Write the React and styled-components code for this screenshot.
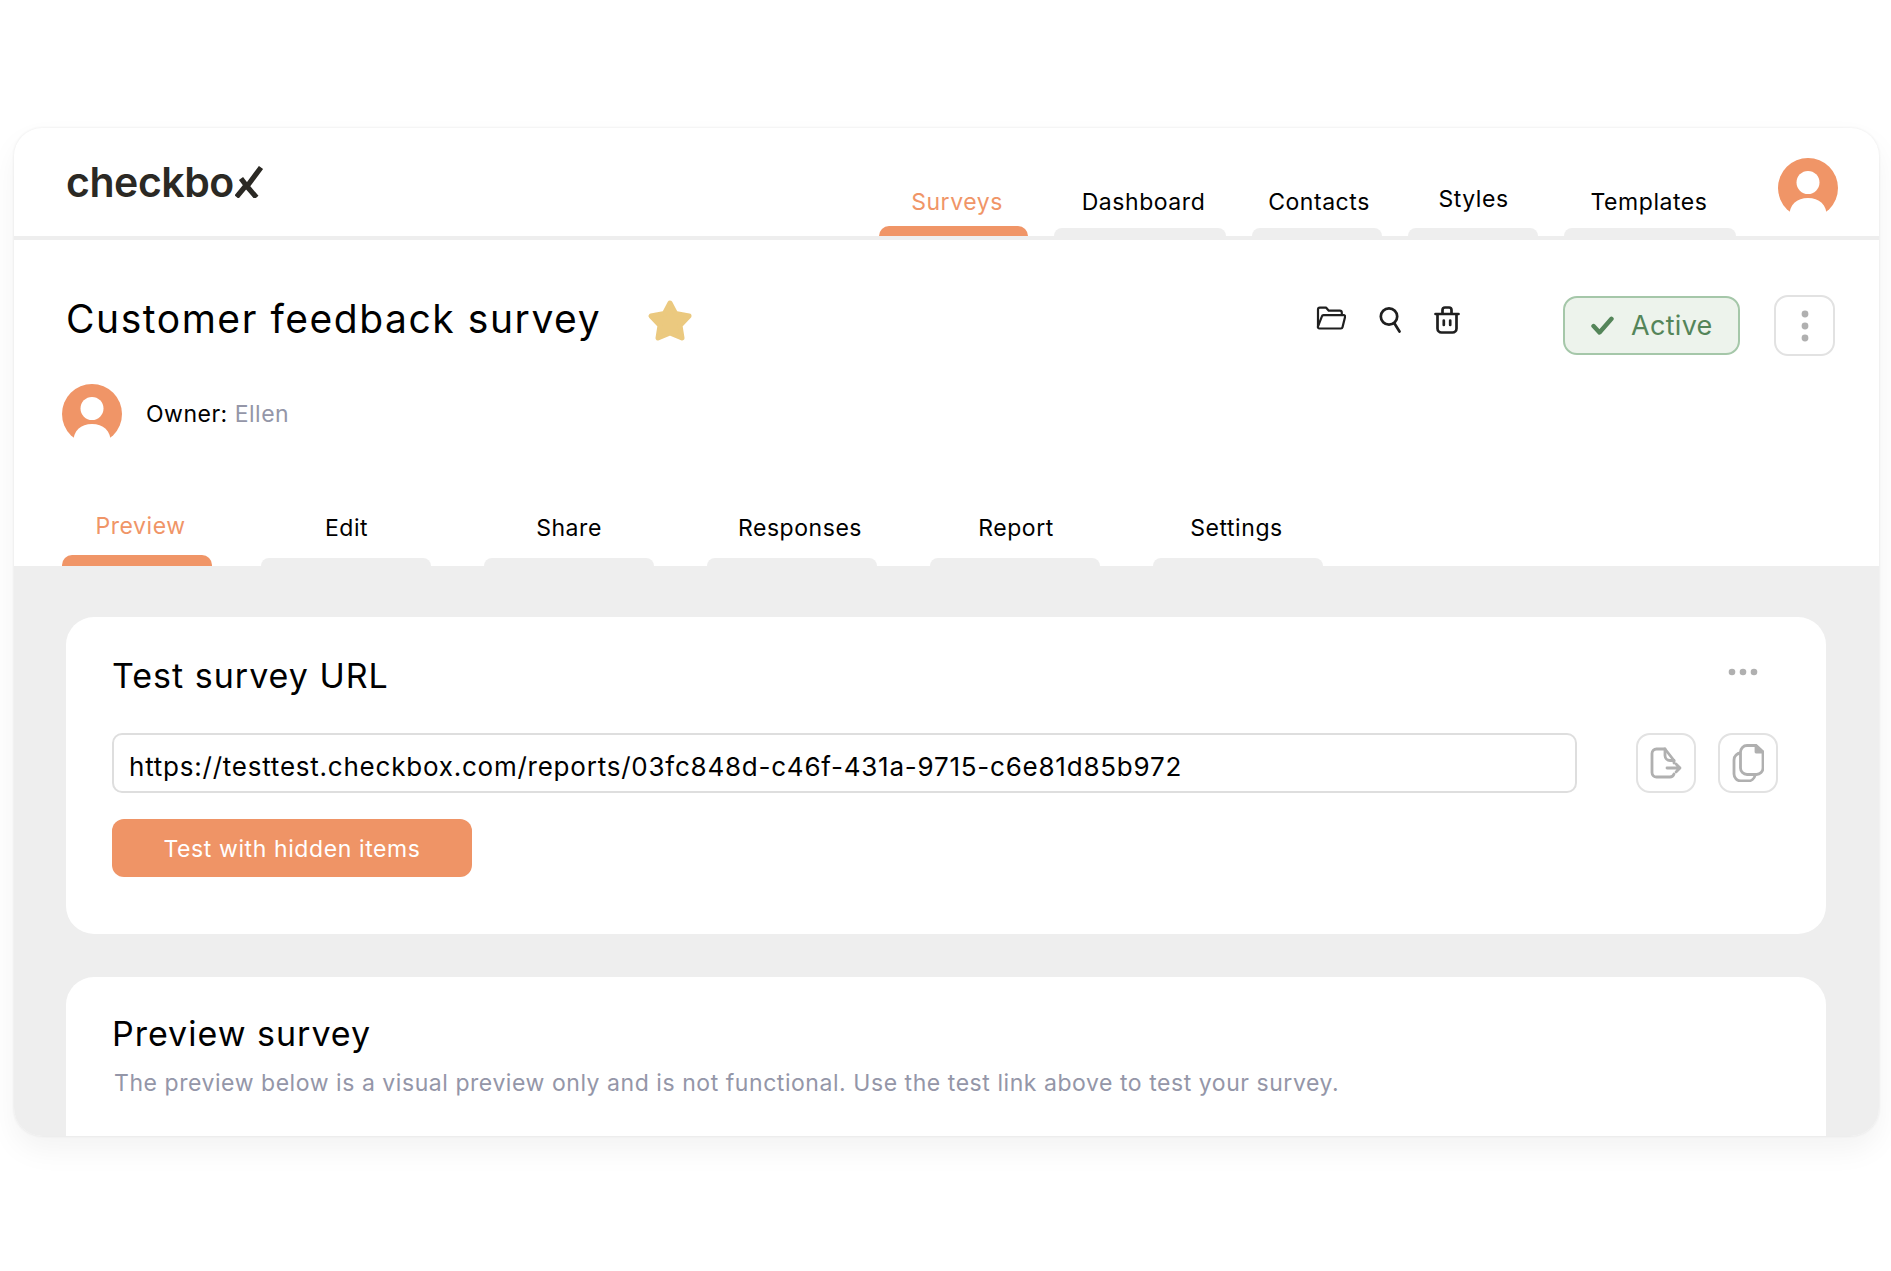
import React from 'react';
import styled, { createGlobalStyle } from 'styled-components';

const Global = createGlobalStyle`
  html, body { margin: 0; padding: 0; background: #fff; }
  body { font-family: Inter, "Liberation Sans", sans-serif; color: #000; }
  * { box-sizing: border-box; }
`;
const Page = styled.div`
  width: 1891px; height: 1271px; padding: 128px 12px 0 14px; overflow: hidden;
`;
const Frame = styled.div`
  height: 1008px; border-radius: 28px; overflow: hidden; background: #fff;
  display: flex; flex-direction: column;
  box-shadow: 0 0 3px rgba(0,0,0,.09), 0 14px 30px rgba(0,0,0,.05);
`;
const Header = styled.header`
  height: 112px; flex: none; display: flex; padding: 0 41px 0 52px; border-bottom: 4px solid #eee;
`;
const Logo = styled.div`
  display: flex; align-items: flex-start; margin-top: 31px; height: 46px;
  font: 600 41px/46px Inter, sans-serif; color: #2b2924; letter-spacing: -.45px;
  svg { margin: 7px 0 0 1px; }
`;
const Nav = styled.nav`
  margin-left: auto; display: flex; gap: 26px; align-items: stretch;
`;
const NavItem = styled.a`
  width: ${p => p.$w}px; display: flex; flex-direction: column; justify-content: flex-end;
`;
const Label = styled.span`
  font-size: 23px; line-height: 28px; letter-spacing: .55px; text-align: center; white-space: nowrap;
  color: ${p => (p.$active ? '#f09567' : '#000')};
  margin-bottom: ${p => p.$mb}px; margin-left: ${p => p.$shift || 0}px;
`;
const Bar = styled.i`
  display: block; border-radius: 10px 10px 0 0; flex: none;
  height: ${p => (p.$active ? p.$tall : 8)}px;
  background: ${p => (p.$active ? '#f09567' : '#eeeeee')};
`;
const AvatarBox = styled.div`
  flex: none; width: 60px; height: 60px;
  margin: ${p => p.$mt || 0}px 0 0 ${p => p.$ml || 0}px;
`;
const Top = styled.section`
  height: 326px; flex: none; padding: 56px 44px 0 52px; display: flex; flex-direction: column;
`;
const TitleRow = styled.div`
  display: flex; align-items: flex-start; height: 60px;
`;
const Title = styled.h1`
  margin: 0; font-size: 39px; line-height: 46px; font-weight: 400; letter-spacing: 1.55px; white-space: nowrap;
`;
const Star = styled.svg`
  margin: 3px 0 0 46px; flex: none;
`;
const Tools = styled.div`
  margin: 10px 0 0 auto; display: flex; align-items: flex-start; gap: 33px; color: #1f1f1f;
`;
const Status = styled.div`
  margin-left: 103px; width: 177px; height: 59px; margin-top: 0; border-radius: 14px; border: 2px solid #a5c7a9;
  background: #edf3ec; color: #548559; display: flex; align-items: center;
  padding-left: 26px; gap: 17px; font-size: 27px; letter-spacing: .3px;
`;
const IconBtn = styled.button`
  flex: none; width: 60px; height: 60px; padding: 0; border-radius: 14px; border: 2px solid #e2e2e2; background: #fff;
  display: flex; align-items: center; justify-content: center; color: #b0b0b0;
`;
const Kebab = styled(IconBtn)`
  margin-left: 34px; width: 61px; height: 61px; margin-top: -1px;
`;
const Owner = styled.div`
  margin: 28px 0 0 -4px; display: flex; align-items: center; gap: 24px;
  font-size: 23px; letter-spacing: .5px;
  span { color: #9496a8; }
`;
const Tabs = styled.nav`
  margin: auto 0 0 -4px; display: flex; gap: 53px; align-items: flex-end;
`;
const Tab = styled.a`
  width: ${p => p.$w}px; display: flex; flex-direction: column;
  margin-right: ${p => p.$mr || 0}px;
`;
const Main = styled.main`
  flex: 1; background: #eee; padding: 51px 53px 0 52px; display: flex; flex-direction: column; gap: 43px; min-height: 0;
`;
const Card = styled.section`
  background: #fff; border-radius: 28px; padding: 40px 48px 0 46px; height: 317px; flex: none;
`;
const PreviewCard = styled(Card)`
  flex: 1; height: auto; padding-top: 38px; border-radius: 28px 28px 0 0;
`;
const CardHead = styled.div`
  display: flex; justify-content: space-between; align-items: center; padding-right: 20px;
`;
const CardTitle = styled.h2`
  margin: 0; font-size: 34px; line-height: 38px; font-weight: 400; letter-spacing: 1px;
`;
const Dots = styled.svg`
  margin-top: -9px;
`;
const UrlRow = styled.div`
  margin-top: 38px; display: flex; align-items: center;
`;
const UrlField = styled.div`
  flex: 1; height: 60px; border: 2px solid #dedede; border-radius: 10px; padding-left: 15px;
  display: flex; align-items: center; font-size: 26px; letter-spacing: .77px; white-space: nowrap; padding-top: 6px;
`;
const UrlActions = styled.div`
  margin-left: 59px; display: flex; gap: 22px;
`;
const Primary = styled.button`
  display: block; margin-top: 26px; width: 360px; height: 58px; border: 0; border-radius: 12px; padding: 2px 0 0;
  background: #ef9466; color: #fff; font: 400 23px Inter, sans-serif; letter-spacing: .6px;
`;
const Desc = styled.p`
  margin: 15px 0 0 2px; font-size: 23px; line-height: 30px; color: #9496a8; letter-spacing: .55px; white-space: nowrap;
`;

const Avatar = ({ mt, ml }) => (
  <AvatarBox $mt={mt} $ml={ml}>
    <svg width="60" height="60" viewBox="0 0 60 60">
      <circle cx="30" cy="30" r="30" fill="#f09567" />
      <circle cx="30" cy="24.500" r="11.500" fill="#fff" />
      <path d="M11 60c0-14 8-20 19-20s19 6 19 20z" fill="#fff" />
    </svg>
  </AvatarBox>
);

const nav = [
  ['Surveys', 149, 7, true], ['Dashboard', 172, 7], ['Contacts', 130, 4],
  ['Styles', 130, 1, false, 3], ['Templates', 172, -2],
];
const tabs = [
  ['Preview', 150, 7, true, -4], ['Edit', 170, 1], ['Share', 170, 0],
  ['Responses', 170, 16], ['Report', 170, 2], ['Settings', 170, -3],
];

export default function App() {
  return (
    <Page>
      <Global />
      <Frame>
        <Header>
          <Logo>
            checkbo
            <svg width="29" height="32" viewBox="0 0 29 32">
              <path d="M1.500 31L11 19.500M6 12.500l6.500 8.500 9 10.500M13 19L26 1.500" fill="none" stroke="#2b2924" strokeWidth="5.200" />
            </svg>
          </Logo>
          <Nav>
            {nav.map(([t, w, shift, active, lift]) => (
              <NavItem key={t} $w={w}>
                <Label $active={active} $shift={shift} $mb={active ? 10 : 12 + (lift || 0)}>{t}</Label>
                <Bar $active={active} $tall={10} />
              </NavItem>
            ))}
          </Nav>
          <Avatar mt={30} ml={42} />
        </Header>
        <Top>
          <TitleRow>
            <Title>Customer feedback survey</Title>
            <Star width="46" height="44" viewBox="0 0 46 44">
              <path d="M23 4L28.500 14.500L42 17L33 26.500L35 39L23 34L11 39L13 26.500L4 17L17.500 14.500Z" fill="#ebc97f" stroke="#ebc97f" strokeWidth="5" strokeLinejoin="round" />
            </Star>
            <Tools>
              <svg width="30" height="25" viewBox="0 0 30 25" fill="none" stroke="currentColor" strokeWidth="2.200" strokeLinejoin="round" strokeLinecap="round">
                <path d="M2 20V3.500a1.800 1.800 0 0 1 1.800-1.800h6.400l2.600 3h11a2 2 0 0 1 2 2v2" />
                <path d="M7.500 9.200h20.300a1.300 1.300 0 0 1 1.300 1.600l-2.600 10.500a1.600 1.600 0 0 1-1.600 1.200H3.600a1.600 1.600 0 0 1-1.600-2.200l3.900-9.900a1.700 1.700 0 0 1 1.600-1.200z" />
              </svg>
              <svg width="22" height="27" viewBox="0 0 22 27" fill="none" stroke="currentColor" strokeWidth="2.700" strokeLinecap="round">
                <circle cx="10" cy="10.500" r="8.200" />
                <path d="M15.500 17.500L20.500 25.500" />
              </svg>
              <svg width="26" height="28" viewBox="0 0 26 28" fill="none" stroke="currentColor" strokeWidth="2.700" strokeLinejoin="round" strokeLinecap="round">
                <path d="M1.500 8h23M8.500 7.500V4a2.500 2.500 0 0 1 2.500-2.500h4A2.500 2.500 0 0 1 17.500 4v3.500M3.500 8v14.500a4 4 0 0 0 4 4h11a4 4 0 0 0 4-4V8" />
                <path d="M9.800 14.500v4.500M16.200 14.500v4.500" />
              </svg>
            </Tools>
            <Status>
              <svg width="23" height="19" viewBox="0 0 23 19" fill="none" stroke="currentColor" strokeWidth="4.400" strokeLinecap="round" strokeLinejoin="round">
                <path d="M2.500 10l6 6.500L20.500 2.800" />
              </svg>
              Active
            </Status>
            <Kebab aria-label="More">
              <svg width="8" height="32" viewBox="0 0 8 32" fill="#b0b0b0">
                <circle cx="4" cy="4" r="3.400" /><circle cx="4" cy="16" r="3.400" /><circle cx="4" cy="28" r="3.400" />
              </svg>
            </Kebab>
          </TitleRow>
          <Owner>
            <Avatar />
            <div>Owner: <span>Ellen</span></div>
          </Owner>
          <Tabs>
            {tabs.map(([t, w, shift, active, mr]) => (
              <Tab key={t} $w={w} $mr={mr}>
                <Label $active={active} $shift={shift} $mb={active ? 15 : 16}>{t}</Label>
                <Bar $active={active} $tall={11} />
              </Tab>
            ))}
          </Tabs>
        </Top>
        <Main>
          <Card>
            <CardHead>
              <CardTitle>Test survey URL</CardTitle>
              <Dots width="30" height="8" viewBox="0 0 30 8" fill="#b0b0b0">
                <circle cx="4" cy="4" r="3.300" /><circle cx="15" cy="4" r="3.300" /><circle cx="26" cy="4" r="3.300" />
              </Dots>
            </CardHead>
            <UrlRow>
              <UrlField>https://testtest.checkbox.com/reports/03fc848d-c46f-431a-9715-c6e81d85b972</UrlField>
              <UrlActions>
                <IconBtn aria-label="Open">
                  <svg width="32" height="32" viewBox="0 0 32 32" fill="none" stroke="currentColor" strokeWidth="2.800" strokeLinecap="round" strokeLinejoin="round">
                    <path d="M24 16v-2.500L15 2H6.500A4.500 4.500 0 0 0 2 6.500v19A4.500 4.500 0 0 0 6.500 30h13a4.500 4.500 0 0 0 4.500-3" />
                    <path d="M15 2v6.500a5 5 0 0 0 5 5h4" />
                    <path d="M17 21h13M26 17l4 4-4 4" />
                  </svg>
                </IconBtn>
                <IconBtn aria-label="Copy">
                  <svg width="32" height="38" viewBox="0 0 32 38" fill="none" stroke="currentColor" strokeWidth="2.800" strokeLinejoin="round">
                    <path d="M9 9A7 7 0 0 0 2 16v14a7 7 0 0 0 7 7h7a7 7 0 0 0 7-5.500" />
                    <path d="M15 1.500h9l7 6.500v16a6.500 6.500 0 0 1-6.500 6.500H15A6.500 6.500 0 0 1 8.500 24V8A6.500 6.500 0 0 1 15 1.500z" />
                    <path d="M24 1.500l7 6.500h-7z" fill="currentColor" />
                  </svg>
                </IconBtn>
              </UrlActions>
            </UrlRow>
            <Primary>Test with hidden items</Primary>
          </Card>
          <PreviewCard>
            <CardTitle>Preview survey</CardTitle>
            <Desc>The preview below is a visual preview only and is not functional. Use the test link above to test your survey.</Desc>
          </PreviewCard>
        </Main>
      </Frame>
    </Page>
  );
}
